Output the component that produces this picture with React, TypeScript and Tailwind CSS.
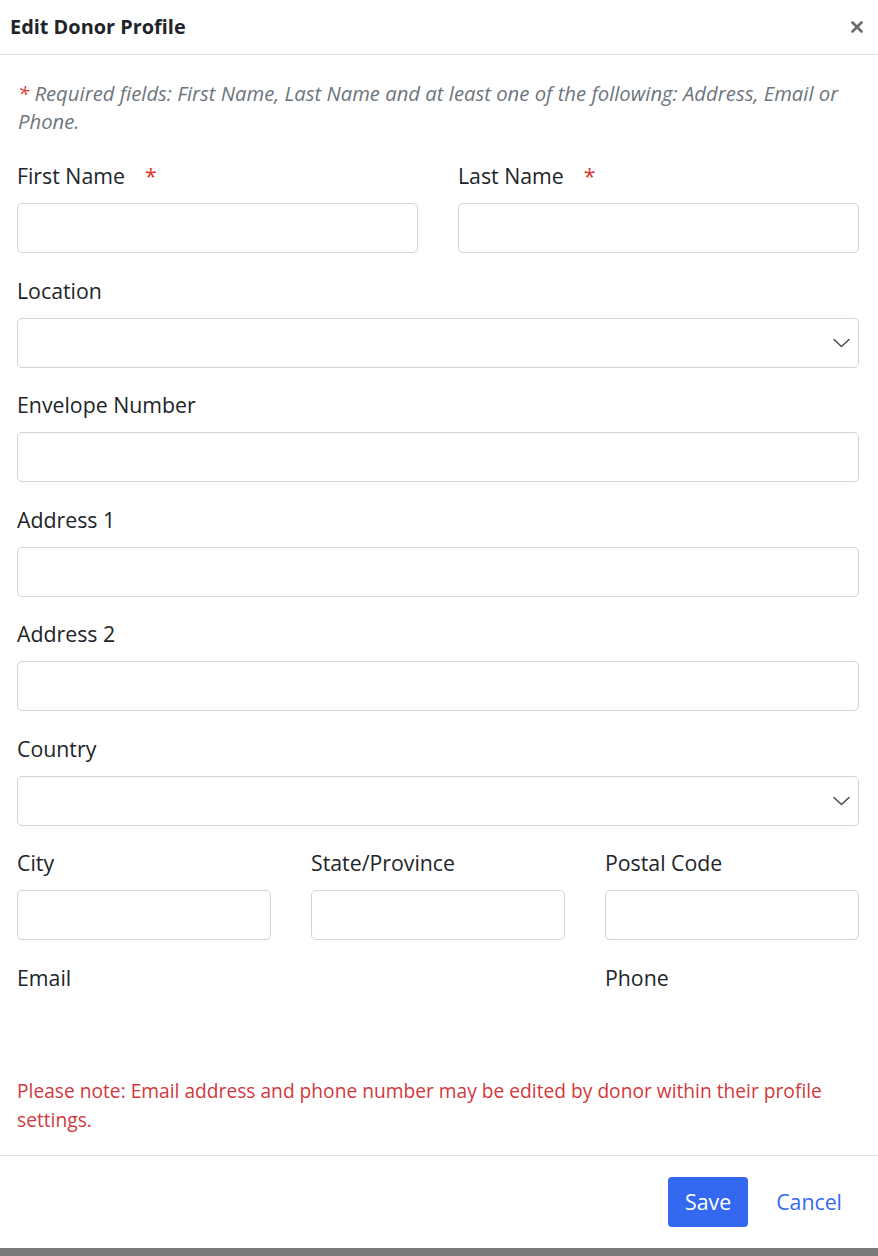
import { X } from "lucide-react";

const font = { fontFamily: '"Open Sans", "Liberation Sans", sans-serif' };

function Label({ text, required }: { text: string; required?: boolean }) {
  return (
    <label className="flex items-center h-[28px] text-[21.3px] text-[#212529] mb-[13px]">
      {text}
      {required && <span className="ml-[20px] text-[#e0312b]">*</span>}
    </label>
  );
}

function Input() {
  return (
    <input
      type="text"
      className="block w-full h-[50px] rounded-[5px] border border-[#ced4da] bg-white px-3 outline-none"
    />
  );
}

function Select() {
  return (
    <div className="relative">
      <select className="block w-full h-[50px] appearance-none rounded-[5px] border border-[#ced4da] bg-white px-3 outline-none" />
      <svg
        className="absolute right-[9px] top-1/2 -translate-y-1/2 pointer-events-none"
        width="17"
        height="10"
        viewBox="0 0 17 10"
        fill="none"
      >
        <polyline points="1,1.5 8.5,8.5 16,1.5" stroke="#495057" strokeWidth="1.6" strokeLinecap="round" strokeLinejoin="round" />
      </svg>
    </div>
  );
}

function Field({ label, required, select }: { label: string; required?: boolean; select?: boolean }) {
  return (
    <div className="mb-[23.5px]">
      <Label text={label} required={required} />
      {select ? <Select /> : <Input />}
    </div>
  );
}

export default function App() {
  return (
    <div className="w-[878px] h-[1256px] bg-[#7a7a7a] flex flex-col" style={font}>
      <div className="bg-white h-[1248px] flex flex-col">
        {/* Header */}
        <div className="flex items-center justify-between h-[55px] pl-[10px] pr-[12px] border-b border-[#dee2e6]">
          <h2 className="text-[19.9px] font-bold text-[#212529]">Edit Donor Profile</h2>
          <X className="h-[18px] w-[18px] text-[#6c6c6c]" strokeWidth={3.5} />
        </div>

        {/* Body */}
        <div className="flex-1 pl-[17px] pr-[19px] pt-[24px]">
          <p className="text-[20.3px] italic leading-[28px] text-[#6c757d] mb-[27px] pl-[1px]">
            <span className="text-[#e0312b]">*</span> Required fields: First Name, Last Name and at least one of the
            following: Address, Email or Phone.
          </p>

          <div className="grid grid-cols-2 gap-x-[40px]">
            <Field label="First Name" required />
            <Field label="Last Name" required />
          </div>
          <Field label="Location" select />
          <Field label="Envelope Number" />
          <Field label="Address 1" />
          <Field label="Address 2" />
          <Field label="Country" select />
          <div className="grid grid-cols-3 gap-x-[40px]">
            <Field label="City" />
            <Field label="State/Province" />
            <Field label="Postal Code" />
          </div>
          <div className="grid grid-cols-3 gap-x-[40px]">
            <div className="col-span-2">
              <Label text="Email" />
            </div>
            <Label text="Phone" />
          </div>

          <p className="mt-[71px] text-[19.2px] leading-[29px] text-[#d1383d]">
            Please note: Email address and phone number may be edited by donor within their profile settings.
          </p>
        </div>

        {/* Footer */}
        <div className="flex items-center justify-end gap-[28px] h-[93px] border-t border-[#dee2e6] pr-[36px]">
          <button className="h-[50px] w-[80px] rounded-[4px] bg-[#3369f0] text-white text-[21.3px]">Save</button>
          <button className="text-[21.3px] text-[#3369f0]">Cancel</button>
        </div>
      </div>
    </div>
  );
}
